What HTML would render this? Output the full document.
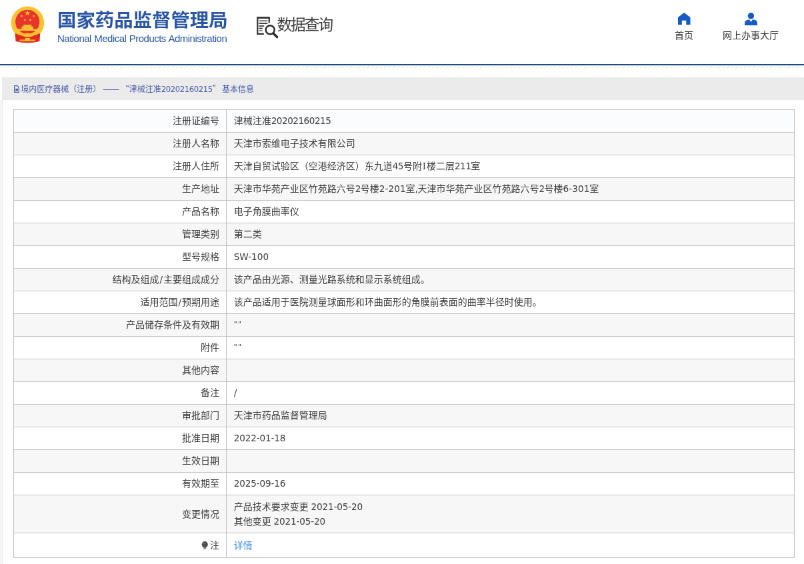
<!DOCTYPE html>
<html lang="zh-CN"><head><meta charset="utf-8"><title>国家药品监督管理局 数据查询</title>
<style>
html,body{margin:0;padding:0;background:#fff;}
body{width:804px;height:564px;overflow:hidden;position:relative;}
#wrap{position:absolute;left:0;top:0;width:1206px;height:846px;transform:scale(0.666667);transform-origin:0 0;overflow:hidden;background:#fff;will-change:transform;
 font-family:"Liberation Sans","Noto Sans CJK SC",sans-serif;font-size:14px;color:#3c3c3c;}
.n{font-family:"DejaVu Sans","Liberation Sans",sans-serif;font-size:13.6px;letter-spacing:-.5px;}
/* header */
#hd{position:absolute;left:0;top:0;width:1206px;height:96px;background:#fff;}
#hd .line{position:absolute;left:0;top:95.7px;width:1206px;height:1.9px;background:#1f4c7c;}
#hd .cy{position:absolute;left:0;top:97.6px;width:1206px;height:1.4px;background:#e6f3fa;}
#hd .hatch{position:absolute;left:0;top:99px;width:1206px;height:3.6px;background:repeating-linear-gradient(135deg,#ebeff5 0 1.5px,#fff 1.5px 4.6px);}
#logo{position:absolute;left:16px;top:9px;}
#cn{position:absolute;left:86.2px;top:12px;font-size:27px;font-weight:bold;color:#2a56a6;line-height:38px;white-space:nowrap;letter-spacing:0;transform:scaleX(1.052);transform-origin:0 0;font-family:"Liberation Sans","Noto Sans CJK SC",sans-serif;}
#en{position:absolute;left:86px;top:49px;font-size:15px;letter-spacing:-.52px;word-spacing:.8px;color:#2a56a6;line-height:18px;white-space:nowrap;}
#dq{position:absolute;left:384px;top:25px;}
#dqt{position:absolute;left:415.4px;top:22.3px;font-size:22.6px;letter-spacing:-1.9px;line-height:32px;color:#3a3a3a;white-space:nowrap;}
.nav{position:absolute;top:45px;text-align:center;font-size:14px;line-height:16px;color:#333;white-space:nowrap;}
.ic{position:absolute;display:block;}
/* panel */
#side{position:absolute;left:0;top:150px;width:3px;height:700px;background:#f6f6f6;border-right:1px solid #e9e9e9;}
#bar{position:absolute;left:3px;top:115.5px;width:1210px;height:34px;background:#ebebeb;}
#bc{position:absolute;left:21px;top:123px;font-size:12px;line-height:20px;color:#4659a6;white-space:nowrap;}
#bc .n{font-size:11.6px;letter-spacing:-.4px;}
/* table */
table.t{position:absolute;left:20px;top:164px;width:1172px;border-collapse:collapse;table-layout:fixed;}
col.c1{width:318.6px;}
.t td{border:1px solid #c2c2c2;height:21px;line-height:21px;padding:6px 10px;white-space:nowrap;vertical-align:middle;}
.t td.k{text-align:right;padding-right:9.6px;}
.t td.v{padding-left:11.1px;}
.sl{letter-spacing:0;margin:0 1px;}
.ri{font-family:"DejaVu Serif","Liberation Serif",serif;font-size:13.4px;margin:0 .8px;}
.t tr.g td{background:#f7f7f7;}
.t tr.f td{background:#fbfcfd;}
.t tr.r2 td{height:44px;line-height:22px;}
.t tr.r2 td div{height:22px;line-height:22px;overflow:visible;}
.t tr.r3 td{height:24px;}
.t a{color:#3386ec;}
.bulb{vertical-align:-1.5px;margin-right:2.2px;}
.q{letter-spacing:1.2px;font-size:11px;position:relative;top:-2.5px;line-height:0;}
.h{letter-spacing:-.15px;}
.qq{display:inline-block;width:12px;text-align:center;font-family:"Noto Sans CJK SC",sans-serif;}

</style></head>
<body>
<div id="wrap">
<div id="hd">
<svg id="logo" width="52" height="58" viewBox="0 0 52 58">
 <circle cx="25.5" cy="25.3" r="24.8" fill="#f8c232"/>
 <circle cx="25.2" cy="23.8" r="18.1" fill="#e8342a"/>
 <path d="M8.6 37 H41.8 V34.5 H34 V30.8 H31.2 V27.9 H19.2 V30.8 H16.4 V34.5 H8.6 Z" fill="#f8c232"/>
 <polygon points="25.2,6.2 26.3,9.3 29.6,9.3 26.9,11.2 27.9,14.3 25.2,12.4 22.5,14.3 23.5,11.2 20.8,9.3 24.1,9.3" fill="#f8c232"/>
 <circle cx="16.4" cy="15" r="1.6" fill="#f4ad38"/><circle cx="34.7" cy="15" r="1.6" fill="#f4ad38"/>
 <circle cx="21.2" cy="21" r="1.6" fill="#f4ad38"/><circle cx="29.6" cy="21" r="1.6" fill="#f4ad38"/>
 <path d="M6.6 40.8 Q25.4 50.1 44.3 40.8 L43.4 53 Q25.4 57.4 7.5 53 Z" fill="#e22d1e"/>
 <path d="M12 39.4 Q25.4 50.8 39 39.4" fill="none" stroke="#f8c232" stroke-width="3.2"/>
 <ellipse cx="25.2" cy="43.4" rx="4.4" ry="2.6" fill="#f8c232"/>
 <ellipse cx="25.2" cy="49.6" rx="4" ry="1.9" fill="#f8c232"/>
 <path d="M13.6 51.6 H36.8" stroke="#f6b636" stroke-width="2.3"/>
</svg>
<div id="cn">国家药品监督管理局</div>
<div id="en">National Medical Products Administration</div>
<svg id="dq" width="36" height="34" viewBox="0 0 36 34">
 <path d="M19.75 9.2 V1.75 H2.3 V25.9 H11.85" fill="none" stroke="#333" stroke-width="2.2"/>
 <path d="M1.2 1.5 H20.85" stroke="#333" stroke-width="2.6"/>
 <path d="M4.5 6.2 H17.4" stroke="#777" stroke-width="2"/>
 <path d="M4.5 10 H17.4" stroke="#333" stroke-width="1.8"/>
 <path d="M4.5 14 H12.3" stroke="#555" stroke-width="2.2"/>
 <path d="M4.5 17.6 H9.75" stroke="#333" stroke-width="1.8"/>
 <path d="M4.5 21 H9.75" stroke="#888" stroke-width="2"/>
 <circle cx="21.15" cy="19.8" r="6.5" fill="#fff" stroke="#2a2a2a" stroke-width="2.4"/>
 <path d="M26.2 25.2 L31.6 30.6" stroke="#2a2a2a" stroke-width="3.5" stroke-linecap="round"/>
</svg>
<div id="dqt">数据查询</div>
<svg class="ic" style="left:1017.3px;top:19.3px" width="18.5" height="18.2" viewBox="0 0 18.5 18.2"><path d="M9.25 0 L18.5 7.05 V18.2 H12.3 V11.7 H5.85 V18.2 H0 V7.05 Z" fill="#165bc5"/></svg>
<div class="nav" style="left:1012px;width:28px;">首页</div>
<svg class="ic" style="left:1117.2px;top:18.6px" width="19.05" height="19.5" viewBox="0 0 19.05 19.5"><circle cx="9.45" cy="4.8" r="4.75" fill="#165bc5"/><path d="M0 19.5 V16.5 Q0 10.4 6 10.4 H7.3 L9.5 13.9 L11.7 10.4 H13 Q19.05 10.4 19.05 16.5 V19.5 Z" fill="#165bc5"/></svg>
<div class="nav" style="left:1084px;width:84px;">网上办事大厅</div>
<div class="line"></div><div class="cy"></div><div class="hatch"></div>
</div>
<div id="bar"></div>
<div id="side"></div>
<div id="bc"><svg width="8" height="11" viewBox="0 0 8 11" style="vertical-align:-1.5px;margin-right:2.2px;position:relative;top:-1px"><path d="M0.7 0.7 H4.8 L7.3 3.2 V10.3 H0.7 Z" fill="#f4f5fa" stroke="#4a5fa8" stroke-width="1.3"/><rect x="2.3" y="4.8" width="3.6" height="3.6" fill="#4a5fa8"/></svg>境内医疗器械（注册） —— <span class="qq">“</span>津械注准<span class="n">20202160215</span><span class="qq" style="width:11px">”</span> 基本信息</div>
<table class="t"><colgroup><col class="c1"><col></colgroup>
<tr class="f"><td class="k">注册证编号</td><td class="v">津械注准<span class="n">20202160215</span></td></tr>
<tr class="g"><td class="k">注册人名称</td><td class="v">天津市索维电子技术有限公司</td></tr>
<tr><td class="k">注册人住所</td><td class="v">天津自贸试验区（空港经济区）东九道<span class="n">45</span>号附<span class="ri">I</span>楼二层<span class="n">211</span>室</td></tr>
<tr class="g"><td class="k">生产地址</td><td class="v">天津市华苑产业区竹苑路六号<span class="n">2</span>号楼<span class="n h" style="letter-spacing:.05px">2-201</span>室<span class="n">,</span>天津市华苑产业区竹苑路六号<span class="n">2</span>号楼<span class="n h" style="letter-spacing:.05px">6-301</span>室</td></tr>
<tr><td class="k">产品名称</td><td class="v">电子角膜曲率仪</td></tr>
<tr class="g"><td class="k">管理类别</td><td class="v">第二类</td></tr>
<tr><td class="k">型号规格</td><td class="v"><span class="n h" style="letter-spacing:0">SW-100</span></td></tr>
<tr class="g"><td class="k">结构及组成<span class="n sl">/</span>主要组成成分</td><td class="v">该产品由光源、测量光路系统和显示系统组成。</td></tr>
<tr><td class="k">适用范围<span class="n sl">/</span>预期用途</td><td class="v">该产品适用于医院测量球面形和环曲面形的角膜前表面的曲率半径时使用。</td></tr>
<tr class="g"><td class="k">产品储存条件及有效期</td><td class="v"><span class="n q">""</span></td></tr>
<tr><td class="k">附件</td><td class="v"><span class="n q">""</span></td></tr>
<tr class="g"><td class="k">其他内容</td><td class="v"></td></tr>
<tr><td class="k">备注</td><td class="v"><span class="n">/</span></td></tr>
<tr class="g"><td class="k">审批部门</td><td class="v">天津市药品监督管理局</td></tr>
<tr><td class="k">批准日期</td><td class="v"><span class="n h">2022-01-18</span></td></tr>
<tr class="g"><td class="k">生效日期</td><td class="v"></td></tr>
<tr><td class="k">有效期至</td><td class="v"><span class="n h">2025-09-16</span></td></tr>
<tr class="g r2"><td class="k">变更情况</td><td class="v"><div>产品技术要求变更 <span class="n h">2021-05-20</span></div><div>其他变更 <span class="n h">2021-05-20</span></div></td></tr>
<tr class="r3"><td class="k"><svg class="bulb" viewBox="0 0 10.5 12.5" width="10.5" height="12.5"><rect x="3.2" y="8.6" width="4.1" height="3.2" rx="0.8" fill="#8c8c92"/><circle cx="5.25" cy="4.7" r="4.6" fill="#4c4c55"/><circle cx="3.9" cy="3.3" r="1.1" fill="#7a7a84"/></svg>注</td><td class="v"><a>详情</a></td></tr>
</table>
</div>
</body></html>
